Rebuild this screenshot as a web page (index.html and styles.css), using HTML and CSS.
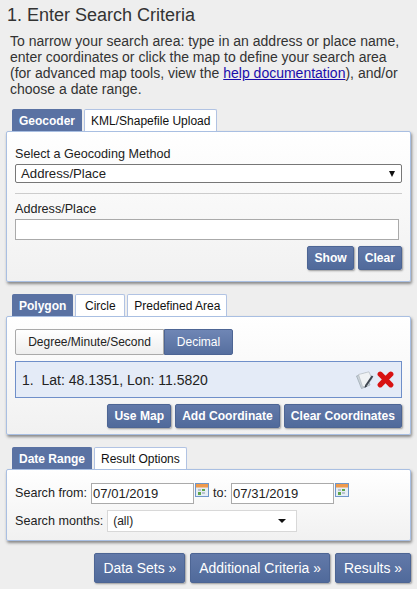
FILE: index.html
```html
<!DOCTYPE html>
<html lang="en">
<head>
    <meta charset="UTF-8">
    <meta name="viewport" content="width=device-width, initial-scale=1.0">
    <title>Enter Search Criteria</title>
    <link rel="stylesheet" href="styles.css">
</head>
<body>
    <h1>1. Enter Search Criteria</h1>
    <p class="intro">To narrow your search area: type in an address or place name, enter coordinates or click the map to define your search area (for advanced map tools, view the <a href="#">help documentation</a>), and/or choose a date range.</p>

    <section class="group geocoder">
        <div class="tabs">
            <span class="tab active">Geocoder</span>
            <span class="tab">KML/Shapefile Upload</span>
        </div>
        <div class="panel">
            <label class="field-label">Select a Geocoding Method</label>
            <div class="method-select">
                <span>Address/Place</span>
                <i class="arrow"></i>
            </div>
            <hr>
            <label class="field-label">Address/Place</label>
            <input type="text" class="address-input">
            <div class="actions">
                <button>Show</button>
                <button>Clear</button>
            </div>
        </div>
    </section>

    <section class="group polygon">
        <div class="tabs">
            <span class="tab active">Polygon</span>
            <span class="tab">Circle</span>
            <span class="tab">Predefined Area</span>
        </div>
        <div class="panel">
            <div class="segments">
                <span class="segment">Degree/Minute/Second</span>
                <span class="segment selected">Decimal</span>
            </div>
            <div class="coord-row">
                <span class="coord-text">1.&nbsp; Lat: 48.1351, Lon: 11.5820</span>
                <svg class="icon-edit" width="18" height="18" viewBox="0 0 18 18">
                    <path d="M0.5 5 L10 2 L14 14 L5.5 17.5 Z" fill="#c9d2d9" stroke="#9aa5ad" stroke-width="0.7"/>
                    <path d="M2.5 3.5 L13 0.8 L16 8 L10 15.5 L6.5 15.5 Z" fill="#eff2f4" stroke="#b4bcc2" stroke-width="0.7"/>
                    <path d="M10 14.5 L16.5 5" stroke="#3d4650" stroke-width="2"/>
                    <path d="M8.6 17 L9.2 13.8 L11.2 15.2 Z" fill="#333b44"/>
                </svg>
                <svg class="icon-delete" width="17" height="17" viewBox="0 0 17 17">
                    <path d="M3.2 3.2 L13.8 13.8 M13.8 3.2 L3.2 13.8" stroke="#d81212" stroke-width="5.2" stroke-linecap="round"/>
                </svg>
            </div>
            <div class="actions">
                <button>Use Map</button>
                <button>Add Coordinate</button>
                <button>Clear Coordinates</button>
            </div>
        </div>
    </section>

    <section class="group dates">
        <div class="tabs">
            <span class="tab active">Date Range</span>
            <span class="tab">Result Options</span>
        </div>
        <div class="panel">
            <div class="date-row">
                <label>Search from:</label>
                <input type="text" class="date-input" value="07/01/2019">
                <svg class="icon-cal" width="14" height="14" viewBox="0 0 14 14">
                    <rect x="0.5" y="0.5" width="13" height="13" fill="#e6edf5" stroke="#6f97cb"/>
                    <rect x="1" y="1" width="12" height="3.5" fill="#ee9a4d"/>
                    <rect x="3" y="6" width="3" height="2" fill="#b9c4ce"/>
                    <rect x="7" y="6" width="3" height="2" fill="#5ea64c"/>
                    <rect x="3" y="9" width="3" height="3" fill="#5ea64c"/>
                    <rect x="7" y="9" width="3" height="2" fill="#b9c4ce"/>
                </svg>
                <label class="to-label">to:</label>
                <input type="text" class="date-input" value="07/31/2019">
                <svg class="icon-cal" width="14" height="14" viewBox="0 0 14 14">
                    <rect x="0.5" y="0.5" width="13" height="13" fill="#e6edf5" stroke="#6f97cb"/>
                    <rect x="1" y="1" width="12" height="3.5" fill="#ee9a4d"/>
                    <rect x="3" y="6" width="3" height="2" fill="#b9c4ce"/>
                    <rect x="7" y="6" width="3" height="2" fill="#5ea64c"/>
                    <rect x="3" y="9" width="3" height="3" fill="#5ea64c"/>
                    <rect x="7" y="9" width="3" height="2" fill="#b9c4ce"/>
                </svg>
            </div>
            <div class="months-row">
                <label>Search months:</label>
                <div class="months-select">
                    <span>(all)</span>
                    <i class="arrow small"></i>
                </div>
            </div>
        </div>
    </section>

    <div class="nav-buttons">
        <button>Data Sets »</button>
        <button>Additional Criteria »</button>
        <button>Results »</button>
    </div>
</body>
</html>
```

FILE: styles.css
```css
html, body {
    margin: 0;
    height: 589px;
    overflow: hidden;
}
body {
    font-family: "Liberation Sans", Arial, sans-serif;
    font-size: 14px;
    background-color: #eeeeee;
    color: #222;
    padding: 0 6px;
    box-sizing: border-box;
}
h1 {
    font-size: 18px;
    font-weight: normal;
    line-height: 20px;
    margin: 0;
    padding: 5px 0 0 1px;
    color: #333;
}
.intro {
    margin: 8px 0 0 4px;
    line-height: 16px;
    color: #333;
    width: 395px;
}
.intro a {
    color: #1a0dab;
}
.group {
    margin-top: 12px;
}
.tabs {
    display: flex;
    gap: 2px;
    padding-left: 6px;
}
.tab {
    height: 22px;
    min-width: 50px;
    line-height: 22px;
    padding: 0 6px;
    font-size: 12px;
    text-align: center;
    color: #111;
    background-color: #fff;
    border: 1px solid #b1c3e3;
    border-bottom: none;
    box-sizing: border-box;
    border-radius: 2px 2px 0 0;
}
.tab.active {
    background-color: #5a72a3;
    border-color: #5a72a3;
    color: #fff;
    font-weight: bold;
}
.panel {
    background: linear-gradient(#ffffff, #f1f1f1);
    border: 1px solid #a9bfe2;
    border-radius: 2px;
    box-shadow: 1px 2px 3px #888;
    padding: 0 8px;
    box-sizing: border-box;
}
.geocoder .panel {
    height: 151px;
    padding-top: 14px;
}
.field-label {
    display: block;
    font-size: 12.6px;
    line-height: 17px;
}
.method-select {
    display: flex;
    justify-content: space-between;
    align-items: center;
    height: 19px;
    margin-top: 1px;
    padding: 0 6px 0 5px;
    background-color: #fff;
    border: 1px solid #777;
    border-radius: 2px;
    box-sizing: border-box;
    font-size: 13.2px;
}
.arrow {
    width: 0;
    height: 0;
    border-left: 3.5px solid transparent;
    border-right: 3.5px solid transparent;
    border-top: 6px solid #111;
}
.arrow.small {
    border-left-width: 4px;
    border-right-width: 4px;
    border-top-width: 4px;
    margin-right: 5px;
}
hr {
    border: none;
    border-top: 1px solid #ccc;
    margin: 10px 0 7px;
}
.address-input {
    display: block;
    width: 384px;
    height: 21px;
    margin-top: 1px;
    border: 1px solid #aaa;
    box-sizing: border-box;
    background-color: #fff;
}
.actions {
    display: flex;
    justify-content: flex-end;
    gap: 4px;
    margin-top: 6px;
}
button {
    height: 24px;
    padding: 0 6px;
    font-family: "Liberation Sans", Arial, sans-serif;
    font-size: 12.1px;
    font-weight: bold;
    color: #fff;
    background: linear-gradient(#6279a9, #506a9b);
    border: 1px solid #4d6594;
    border-radius: 2px;
    box-shadow: 1px 1px 2px #999;
}
.polygon {
    margin-top: 12px;
}
.polygon .panel {
    height: 119px;
    padding-top: 12px;
}
.segments {
    display: flex;
    height: 26px;
}
.segment {
    line-height: 24px;
    padding: 0 5px;
    font-size: 12px;
    border: 1px solid #aaa;
    border-radius: 2px 0 0 2px;
    background: linear-gradient(#fff, #eee);
    box-sizing: border-box;
    width: 149px;
    text-align: center;
}
.segment.selected {
    width: 69px;
    padding: 0;
    color: #fff;
    background: linear-gradient(#6f86b5, #566f9f);
    border-color: #4d6594;
    border-radius: 0 2px 2px 0;
}
.coord-row {
    display: flex;
    align-items: center;
    height: 37px;
    margin-top: 6px;
    padding: 0 7px 0 6px;
    background-color: #e4ebf7;
    border: 1px solid #6f8fc9;
    box-sizing: border-box;
}
.coord-text {
    flex: 1;
}
.icon-edit {
    margin-right: 3px;
}
.dates {
    margin-top: 12px;
}
.dates .panel {
    height: 72px;
    padding-top: 13px;
}
.date-row {
    display: flex;
    align-items: flex-start;
    height: 21px;
    font-size: 12.6px;
}
.date-row label {
    line-height: 21px;
    margin-right: 4px;
}
.date-input {
    width: 103px;
    height: 21px;
    padding: 0 1px;
    border: 1px solid #aaa;
    box-sizing: border-box;
    font-family: "Liberation Sans", Arial, sans-serif;
    font-size: 13px;
    color: #222;
}
.icon-cal {
    margin-left: 1px;
}
.to-label {
    margin-left: 4px;
}
.months-row {
    display: flex;
    align-items: center;
    margin-top: 6px;
    font-size: 12.6px;
}
.months-row label {
    margin-right: 4px;
}
.months-select {
    display: flex;
    justify-content: space-between;
    align-items: center;
    width: 190px;
    height: 22px;
    padding: 0 5px;
    font-size: 12px;
    background-color: #fff;
    border: 1px solid #d8d8d8;
    box-sizing: border-box;
}
.nav-buttons {
    display: flex;
    justify-content: flex-end;
    gap: 5px;
    margin-top: 12px;
}
.nav-buttons button {
    height: 30px;
    padding: 0 8px;
    font-size: 13.95px;
    font-weight: normal;
}
```
